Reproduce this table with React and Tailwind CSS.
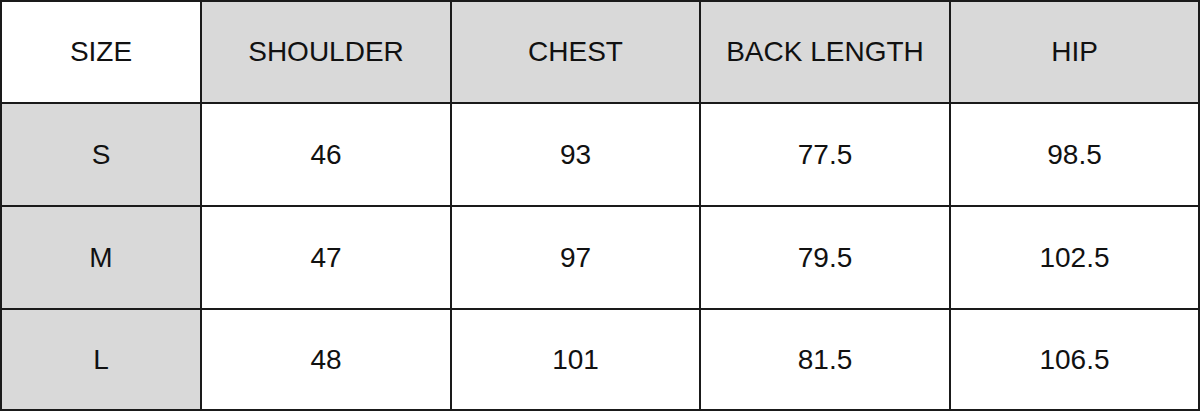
const HEAD = ['SIZE', 'SHOULDER', 'CHEST', 'BACK LENGTH', 'HIP']

const ROWS = [
  ['S', '46', '93', '77.5', '98.5'],
  ['M', '47', '97', '79.5', '102.5'],
  ['L', '48', '101', '81.5', '106.5'],
]

export default function App() {
  return (
    <div className="w-[1200px] h-[411px] bg-white" style={{ fontFamily: '"Liberation Sans", Arial, sans-serif' }}>
      <div className="grid grid-cols-[198px_248px_247px_248px_247px] grid-rows-[100px_101px_101px_99px] gap-[2px] p-[2px] bg-[#1a1a1a] text-[28px] text-[#111]">
        {HEAD.map((h, i) => (
          <div key={h} className={`flex items-center justify-center ${i === 0 ? 'bg-white' : 'bg-[#d9d9d9]'}`}>
            {h}
          </div>
        ))}
        {ROWS.map(row =>
          row.map((cell, i) => (
            <div key={row[0] + i} className={`flex items-center justify-center ${i === 0 ? 'bg-[#d9d9d9]' : 'bg-white'}`}>
              {cell}
            </div>
          ))
        )}
      </div>
    </div>
  )
}
